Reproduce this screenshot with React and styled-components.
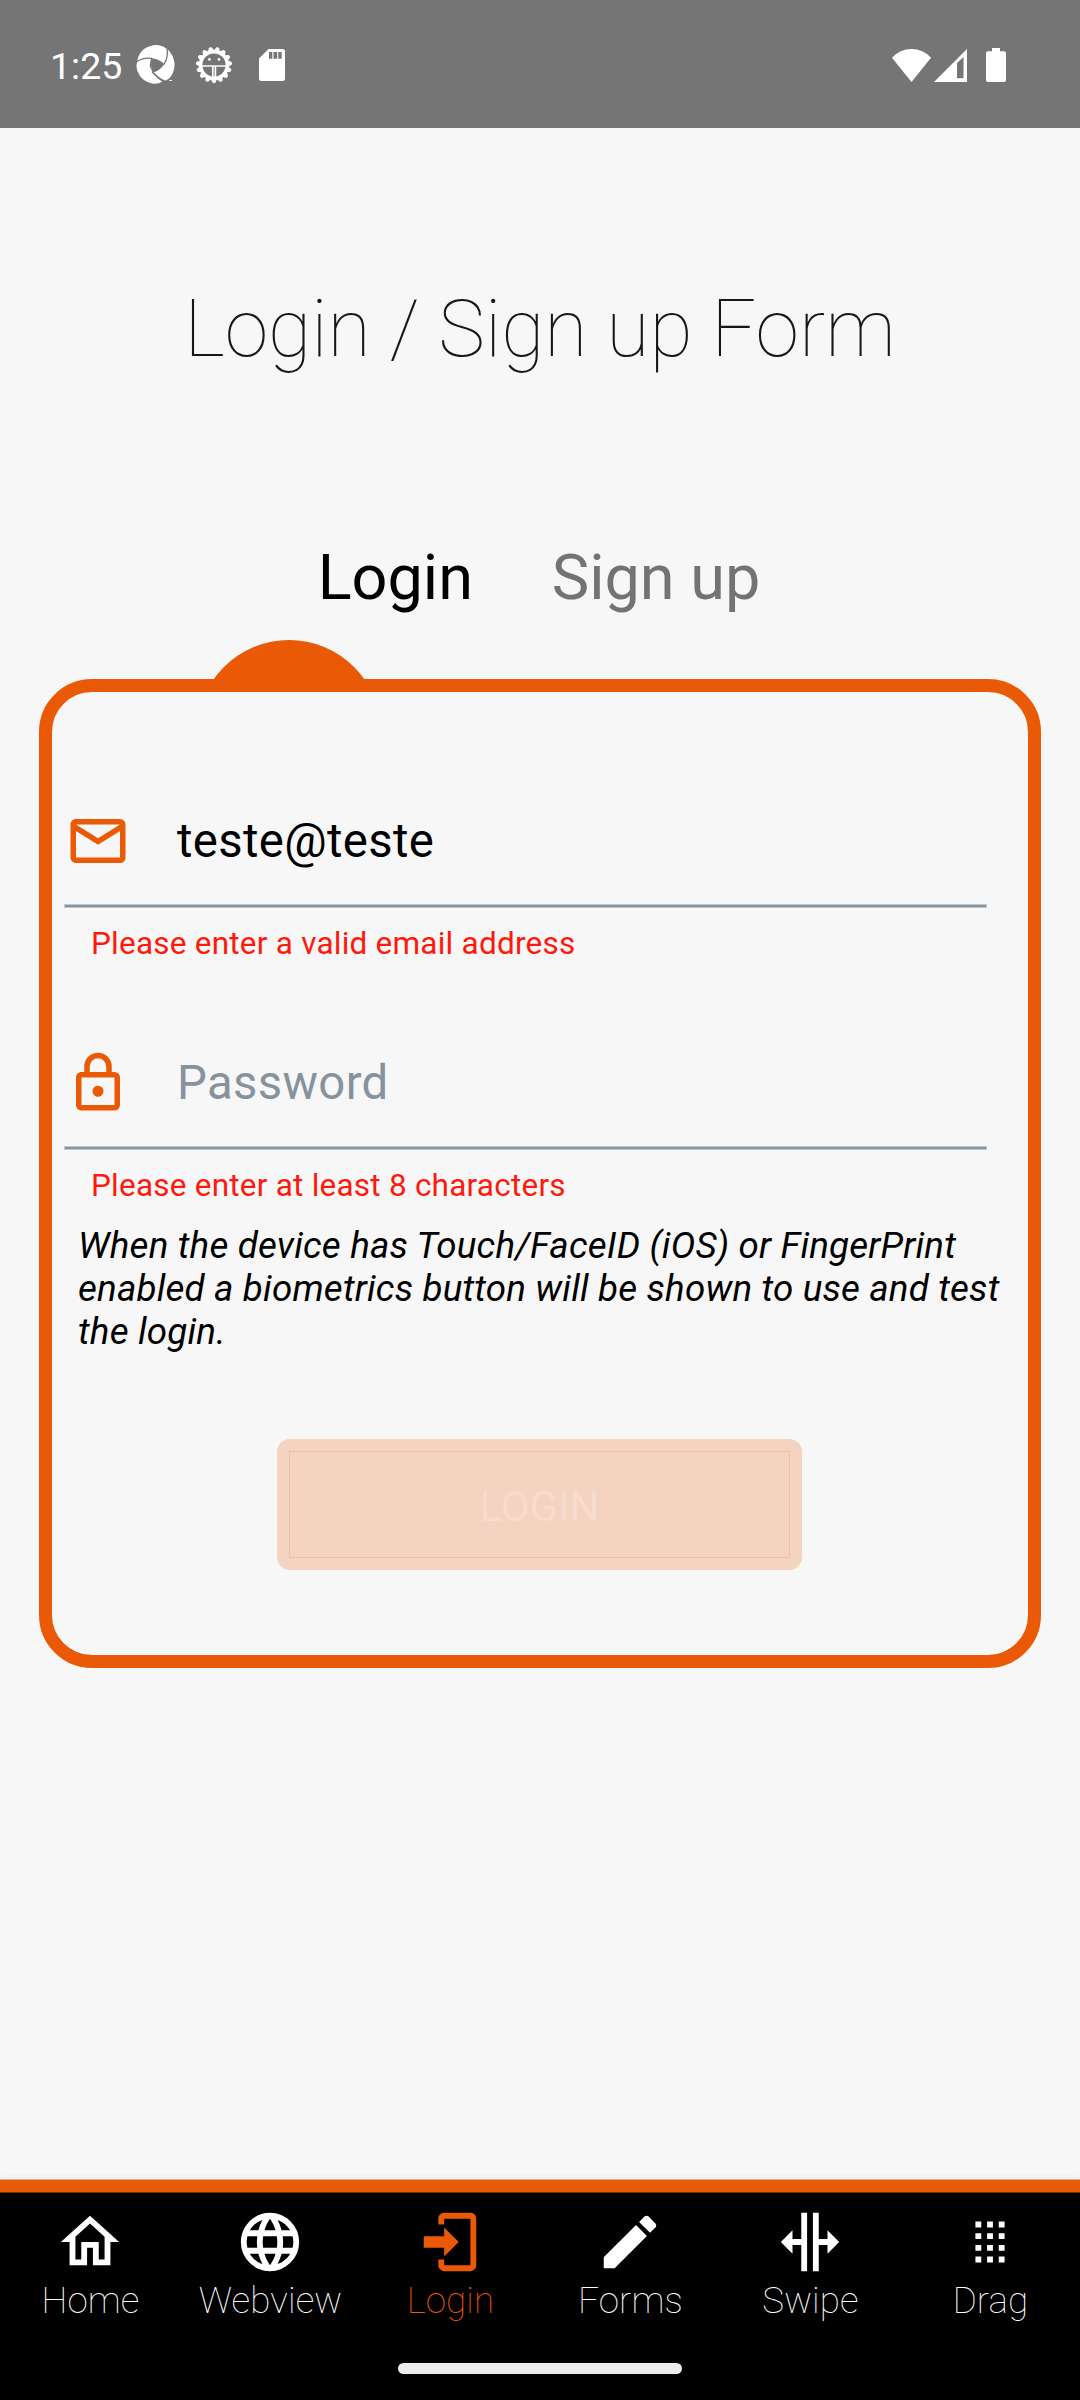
import React from "react";
import styled, { createGlobalStyle } from "styled-components";

const ORANGE = "#ea5906";
const SURFACE = "#f7f7f7";
const MUTED = "#86939e";

const GlobalStyle = createGlobalStyle`
  * { box-sizing: border-box; }
  body { margin: 0; background: ${SURFACE}; font-family: Roboto, sans-serif; }
  svg { display: block; flex: none; }
`;

const Screen = styled.div`
  width: 1080px;
  height: 2400px;
  display: flex;
  flex-direction: column;
  overflow: hidden;
  background: ${SURFACE};
`;

const StatusBar = styled.header`
  height: 128px;
  flex: none;
  display: flex;
  align-items: center;
  justify-content: space-between;
  padding: 2px 70px 0 50px;
  background: #757575;
  color: #fff;
`;

const StatusGroup = styled.div`
  display: flex;
  align-items: center;
`;

const Clock = styled.span`
  width: 86px;
  padding-top: 2px;
  font-size: 37.5px;
  line-height: 44px;
`;

const Content = styled.main`
  flex: 1;
  display: flex;
  flex-direction: column;
`;

const Title = styled.h1`
  margin: 155px 0 0;
  text-align: center;
  font-size: 78.75px;
  line-height: 92px;
  font-weight: 100;
  color: #16161c;
`;

const FormTabs = styled.div`
  margin-top: 166px;
  padding-right: 2px;
  display: flex;
  justify-content: center;
  gap: 78.75px;
`;

const FormTab = styled.span`
  font-size: 63px;
  line-height: 74px;
  color: ${(p) => (p.$active ? "#000" : "#737373")};
`;

const TabMarker = styled.div`
  margin: 25px 0 0 197px;
  width: 184px;
  height: 39px;
  overflow: hidden;

  &::before {
    content: "";
    display: block;
    height: 184px;
    border-radius: 50%;
    background: ${ORANGE};
  }
`;

const Card = styled.section`
  margin: 0 39px;
  height: 989px;
  border: 13px solid ${ORANGE};
  border-radius: 53px;
  padding-top: 86px;
  display: flex;
  flex-direction: column;
`;

const Field = styled.div`
  width: 923px;
  margin: 0 0 ${(p) => p.$gap}px 12px;
`;

const FieldRow = styled.div`
  height: 126px;
  padding-left: 1px;
  display: flex;
  align-items: center;
  gap: 46px;
`;

const FieldText = styled.span`
  font-size: 47.25px;
  line-height: 56px;
  letter-spacing: 0.36px;
  color: ${(p) => (p.$placeholder ? MUTED : "#000")};
`;

const Underline = styled.div`
  height: 4px;
  border: 1px solid #bec5cb;
  background: ${MUTED};
`;

const FieldError = styled.p`
  margin: 17px 0 0 27px;
  font-size: 31.5px;
  line-height: 38px;
  letter-spacing: 0.23px;
  color: #ff190c;
`;

const Hint = styled.p`
  margin: 0 0 86px 26px;
  width: 940px;
  font-size: 36.75px;
  line-height: 43px;
  letter-spacing: 0.175px;
  font-style: italic;
  white-space: pre-line;
  color: #000;
`;

const SubmitButton = styled.button`
  margin-left: 225px;
  width: 525px;
  height: 131px;
  padding: 12px;
  border: 0;
  border-radius: 13px;
  background: #f4d3c0;
  font: inherit;
`;

const SubmitLabel = styled.span`
  height: 107px;
  padding-top: 4px;
  display: flex;
  align-items: center;
  justify-content: center;
  border: 1px solid #efc0a6;
  font-size: 42px;
  line-height: 50px;
  color: #f6dccf;
`;

const BottomBar = styled.footer`
  flex: none;
  height: 221px;
  border-top: 1px solid #cdb3a2;
  background: #000;
  box-shadow: 0 -2px 6px rgba(0, 0, 0, 0.05);
`;

const BarAccent = styled.div`
  height: 13px;
  background: ${ORANGE};
  border-bottom: 1px solid #752c03;
`;

const NavRow = styled.nav`
  display: grid;
  grid-template-columns: repeat(6, 1fr);
  padding-top: 14px;
`;

const NavItem = styled.div`
  display: flex;
  flex-direction: column;
  align-items: center;
  color: ${(p) => (p.$active ? ORANGE : "#fff")};
`;

const NavLabel = styled.span`
  margin-top: 2px;
  padding-left: 1px;
  font-size: 36.75px;
  line-height: 43px;
  font-weight: 100;
  letter-spacing: 0.12px;
`;

const HomeIndicator = styled.div`
  width: 284px;
  height: 11px;
  margin: 41px auto 0;
  border-radius: 6px;
  background: #ebebeb;
`;

const PATHS = {
  email:
    "M4,4H20A2,2 0 0,1 22,6V18A2,2 0 0,1 20,20H4C2.89,20 2,19.1 2,18V6C2,4.89 2.89,4 4,4M12,11L20,6H4L12,11M4,18H20V8.37L12,13.36L4,8.37V18Z",
  lock:
    "M12,17C10.89,17 10,16.1 10,15C10,13.89 10.89,13 12,13A2,2 0 0,1 14,15A2,2 0 0,1 12,17M18,20V10H6V20H18M18,8A2,2 0 0,1 20,10V20A2,2 0 0,1 18,22H6C4.89,22 4,21.1 4,20V10C4,8.89 4.89,8 6,8H7V6A5,5 0 0,1 12,1A5,5 0 0,1 17,6V8H18M12,3A3,3 0 0,0 9,6V8H15V6A3,3 0 0,0 12,3Z",
  home:
    "M12,5.69L17,10.19V18H15V12H9V18H7V10.19L12,5.69M12,3L2,12H5V20H11V14H13V20H19V12H22L12,3Z",
  web:
    "M16.36,14C16.44,13.34 16.5,12.68 16.5,12C16.5,11.32 16.44,10.66 16.36,10H19.74C19.9,10.64 20,11.31 20,12C20,12.69 19.9,13.36 19.74,14M14.59,19.56C15.19,18.45 15.65,17.25 15.97,16H18.92C17.96,17.65 16.43,18.93 14.59,19.56M14.34,14H9.66C9.56,13.34 9.5,12.68 9.5,12C9.5,11.32 9.56,10.65 9.66,10H14.34C14.43,10.65 14.5,11.32 14.5,12C14.5,12.68 14.43,13.34 14.34,14M12,19.96C11.17,18.76 10.5,17.43 10.09,16H13.91C13.5,17.43 12.83,18.76 12,19.96M8,8H5.08C6.03,6.34 7.57,5.06 9.4,4.44C8.8,5.55 8.35,6.75 8,8M5.08,16H8C8.35,17.25 8.8,18.45 9.4,19.56C7.57,18.93 6.03,17.65 5.08,16M4.26,14C4.1,13.36 4,12.69 4,12C4,11.31 4.1,10.64 4.26,10H7.64C7.56,10.66 7.5,11.32 7.5,12C7.5,12.68 7.56,13.34 7.64,14M12,4.03C12.83,5.23 13.5,6.57 13.91,8H10.09C10.5,6.57 11.17,5.23 12,4.03M18.92,8H15.97C15.65,6.75 15.19,5.55 14.59,4.44C16.43,5.07 17.96,6.34 18.92,8M12,2C6.47,2 2,6.5 2,12A10,10 0 0,0 12,22A10,10 0 0,0 22,12A10,10 0 0,0 12,2Z",
  login:
    "M19,2C20.11,2 21,2.9 21,4V20C21,21.1 20.11,22 19,22H10C8.89,22 8,21.1 8,20V18H10V20H19V4H10V6H8V4C8,2.9 8.89,2 10,2H19M3,10V14H10V17L15,12L10,7V10H3Z",
  pencil:
    "M20.71,7.04C21.1,6.65 21.1,6 20.71,5.63L18.37,3.29C18,2.9 17.35,2.9 16.96,3.29L15.12,5.12L18.87,8.87M3,17.25V21H6.75L17.81,9.93L14.06,6.18L3,17.25Z",
  swipe:
    "M9,11H6V8L2,12L6,16V13H9V22H11V2H9V11M15,11H18V8L22,12L18,16V13H15V22H13V2H15V11Z",
  drag:
    "M7,19V17H9V19H7M11,19V17H13V19H11M15,19V17H17V19H15M7,15V13H9V15H7M11,15V13H13V15H11M15,15V13H17V15H15M7,11V9H9V11H7M11,11V9H13V11H11M15,11V9H17V11H15M7,7V5H9V7H7M11,7V5H13V7H11M15,7V5H17V7H15Z",
};

function Glyph({ name, size, color = "currentColor" }) {
  return (
    <svg width={size} height={size} viewBox="0 0 24 24" fill={color}>
      <path d={PATHS[name]} />
    </svg>
  );
}

function SwirlIcon() {
  return (
    <svg width="40" height="40" viewBox="0 0 40 40">
      <path
        fill="#fff"
        d="M14 1.3Q20-.9 25.500 1Q31 3 33.500 6.500Q37.500 11 38 15.500Q39.500 21 37 27.500Q34.500 33 31.500 34.500Q29 36 27.800 35Q24 33.500 18.500 28L16 26C20 32 24 35.500 26.500 36.500Q22 39.500 16 38.500Q8 36.500 4 31Q.2 26 .5 20.500Q1.500 9 8 4Q11 2 14 1.300Z"
      />
      <path
        fill="#757575"
        d="M15.500 13.200Q23 13.800 28.300 19Q24 25.800 17.500 27.300Q13.800 21 15.500 13.200Z"
      />
      <path
        fill="none"
        stroke="#757575"
        strokeWidth="1.300"
        d="M.5 17Q7 12 16 13.400M31 3.600Q32.500 12 28 19.300M16 26.800Q21 32.700 28 36.300M15.500 13.500L14.300 21L17.300 27.300"
      />
      <path fill="#fff" d="M33.500 35h2.500v1h-2.500z" />
    </svg>
  );
}

function GearIcon() {
  const teeth = Array.from({ length: 15 }, (_, i) => 12 + i * 24);
  return (
    <svg width="38" height="38" viewBox="-19 -19 38 38">
      {teeth.map((angle) => (
        <path
          key={angle}
          transform={`rotate(${angle})`}
          fill="#fff"
          d="M-3.400 -13.500L-1.500 -17.600Q0 -18.800 1.500 -17.600L3.400 -13.500Z"
        />
      ))}
      <circle r="13.300" fill="none" stroke="#fff" strokeWidth="3.400" />
      <path
        fill="none"
        stroke="#fff"
        strokeWidth="1.700"
        d="M-13 1H13M-1.200 1V14M1.400 1V14"
      />
      <circle cx="-4.600" cy="-5.600" r="1.400" fill="#fff" />
      <circle cx="5" cy="-5.600" r="1.400" fill="#fff" />
    </svg>
  );
}

function SdCardIcon() {
  return (
    <svg width="26" height="32" viewBox="0 0 26 32">
      <path
        fill="#fff"
        fillRule="evenodd"
        d="M9.500 0H23.500Q26 0 26 2.500V29.500Q26 32 23.500 32H2.500Q0 32 0 29.500V9.500ZM10 3V9.700H13.300V3ZM14.500 3V9.700H18.200V3ZM19.300 3V9.700H22.700V3Z"
      />
    </svg>
  );
}

function WifiIcon() {
  return (
    <svg width="39" height="33" viewBox="0 0 39 33">
      <path fill="#fff" d="M0 8.700Q8 0 19.500 0T39 8.700L19.500 33Z" />
    </svg>
  );
}

function SignalIcon() {
  return (
    <svg width="33" height="33" viewBox="0 0 33 33">
      <path fill="#fff" fillRule="evenodd" d="M0 33L33 0V33ZM23 14V29.300H29.500V8Z" />
    </svg>
  );
}

function BatteryIcon() {
  return (
    <svg width="20" height="34" viewBox="0 0 20 34">
      <path
        fill="#fff"
        d="M6 0H14V3.300H18Q20 3.300 20 5.300V32Q20 34 18 34H2Q0 34 0 32V5.300Q0 3.300 2 3.300H6Z"
      />
    </svg>
  );
}

const IconSlot = styled.span`
  margin-left: ${(p) => p.$space}px;
`;

const NAV = [
  { icon: "home", label: "Home" },
  { icon: "web", label: "Webview" },
  { icon: "login", label: "Login", active: true },
  { icon: "pencil", label: "Forms" },
  { icon: "swipe", label: "Swipe" },
  { icon: "drag", label: "Drag" },
];

export default function App() {
  return (
    <Screen>
      <GlobalStyle />
      <StatusBar>
        <StatusGroup>
          <Clock>1:25</Clock>
          <SwirlIcon />
          <IconSlot $space={19}>
            <GearIcon />
          </IconSlot>
          <IconSlot $space={26}>
            <SdCardIcon />
          </IconSlot>
        </StatusGroup>
        <StatusGroup>
          <WifiIcon />
          <IconSlot $space={3}>
            <SignalIcon />
          </IconSlot>
          <IconSlot $space={19}>
            <BatteryIcon />
          </IconSlot>
          <IconSlot $space={4} />
        </StatusGroup>
      </StatusBar>
      <Content>
        <Title>Login / Sign up Form</Title>
        <FormTabs>
          <FormTab $active>Login</FormTab>
          <FormTab>Sign up</FormTab>
        </FormTabs>
        <TabMarker />
        <Card>
          <Field $gap={57}>
            <FieldRow>
              <Glyph name="email" size={66} color={ORANGE} />
              <FieldText>teste@teste</FieldText>
            </FieldRow>
            <Underline />
            <FieldError>Please enter a valid email address</FieldError>
          </Field>
          <Field $gap={19}>
            <FieldRow>
              <Glyph name="lock" size={66} color={ORANGE} />
              <FieldText $placeholder>Password</FieldText>
            </FieldRow>
            <Underline />
            <FieldError>Please enter at least 8 characters</FieldError>
          </Field>
          <Hint>
            {"When the device has Touch/FaceID (iOS) or FingerPrint\nenabled a biometrics button will be shown to use and test\nthe login."}
          </Hint>
          <SubmitButton>
            <SubmitLabel>LOGIN</SubmitLabel>
          </SubmitButton>
        </Card>
      </Content>
      <BottomBar>
        <BarAccent />
        <NavRow>
          {NAV.map((item) => (
            <NavItem key={item.label} $active={item.active}>
              <Glyph name={item.icon} size={70} />
              <NavLabel>{item.label}</NavLabel>
            </NavItem>
          ))}
        </NavRow>
        <HomeIndicator />
      </BottomBar>
    </Screen>
  );
}
